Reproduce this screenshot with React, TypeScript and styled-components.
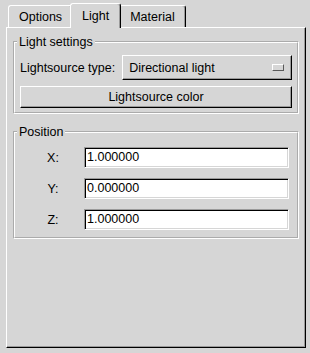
import { Fragment } from "react";
import styled, { createGlobalStyle } from "styled-components";

const GlobalStyle = createGlobalStyle`
  html, body {
    margin: 0;
    padding: 0;
    background: #d6d6d6;
  }
  body {
    font-family: "Liberation Sans", Arial, sans-serif;
    font-size: 12.5px;
    color: #000;
  }
`;

const Window = styled.div`
  box-sizing: border-box;
  width: 310px;
  height: 353px;
  display: flex;
  flex-direction: column;
  padding: 3px 4px 5px 6px;
  background: #d6d6d6;
`;

const TabRow = styled.div`
  display: flex;
  align-items: flex-end;
  padding-left: 2px;
  margin-bottom: -1px;
`;

const Tab = styled.div<{ $active?: boolean }>`
  position: relative;
  z-index: ${(p) => (p.$active ? 2 : 1)};
  background: #d6d6d6;
  border-top: 1px solid #fff;
  border-left: 1px solid #fff;
  border-right: 1px solid #000;
  border-radius: 3px 3px 0 0;
  box-shadow: inset -1px 0 #9a9a9a;
  line-height: 19px;
  white-space: nowrap;
  padding: ${(p) => (p.$active ? "3px 11px 2px" : "2px 10px 0")};
  margin: ${(p) => (p.$active ? "0 -2px 0 -3px" : "0 0 1px 0")};
`;

const Panel = styled.div`
  flex: 1;
  display: flex;
  flex-direction: column;
  padding: 7px 6px;
  border-top: 1px solid #fff;
  border-left: 1px solid #fff;
  border-right: 1px solid #000;
  border-bottom: 1px solid #000;
  box-shadow: inset -1px -1px #9a9a9a;
`;

const Frame = styled.fieldset<{ $gap?: number; $pad?: string }>`
  margin: ${(p) => p.$gap ?? 0}px 0 0 0;
  min-width: 0;
  border: 2px groove #fff;
  padding: ${(p) => p.$pad ?? "6px 5px 4px 5px"};
`;

const Legend = styled.legend`
  margin-left: -3px;
  padding: 0 2px;
  line-height: 14px;
`;

const Row = styled.div`
  display: flex;
  align-items: center;
  gap: 7px;
`;

const Label = styled.span`
  white-space: nowrap;
`;

const raised = `
  box-sizing: border-box;
  background: #d6d6d6;
  border: 1px solid;
  border-color: #fff #000 #000 #fff;
  box-shadow: inset -1px -1px #9a9a9a;
`;

const OptionMenu = styled.div`
  ${raised}
  flex: 1;
  height: 25px;
  display: flex;
  align-items: center;
  justify-content: space-between;
  padding: 0 7px 0 6px;
`;

const Indicator = styled.span`
  box-sizing: border-box;
  width: 12px;
  height: 7px;
  border: 1px solid;
  border-color: #fff #5a5a5a #5a5a5a #fff;
  background: #d6d6d6;
`;

const Button = styled.div`
  ${raised}
  margin-top: 6px;
  height: 22px;
  display: flex;
  align-items: center;
  justify-content: center;
`;

const FieldGrid = styled.div`
  display: grid;
  grid-template-columns: 64px 1fr;
  row-gap: 10px;
  align-items: center;
  padding-right: 3px;
`;

const AxisLabel = styled.span`
  text-align: center;
  padding-left: 2px;
`;

const Entry = styled.div`
  box-sizing: border-box;
  height: 21px;
  background: #fff;
  border: 1px solid;
  border-color: #9a9a9a #fff #fff #9a9a9a;
  box-shadow: inset 1px 1px #000, inset -1px -1px #d6d6d6;
  padding: 0 2px;
  line-height: 19px;
`;

const axes = [
  { name: "X", value: "1.000000" },
  { name: "Y", value: "0.000000" },
  { name: "Z", value: "1.000000" },
];

export default function App() {
  return (
    <Window>
      <GlobalStyle />
      <TabRow>
        <Tab>Options</Tab>
        <Tab $active>Light</Tab>
        <Tab>Material</Tab>
      </TabRow>
      <Panel>
        <Frame>
          <Legend>Light settings</Legend>
          <Row>
            <Label>Lightsource type:</Label>
            <OptionMenu>
              <span>Directional light</span>
              <Indicator />
            </OptionMenu>
          </Row>
          <Button>Lightsource color</Button>
        </Frame>
        <Frame $gap={11} $pad="8px 5px 7px 5px">
          <Legend>Position</Legend>
          <FieldGrid>
            {axes.map((a) => (
              <Fragment key={a.name}>
                <AxisLabel>{a.name}:</AxisLabel>
                <Entry>{a.value}</Entry>
              </Fragment>
            ))}
          </FieldGrid>
        </Frame>
      </Panel>
    </Window>
  );
}
